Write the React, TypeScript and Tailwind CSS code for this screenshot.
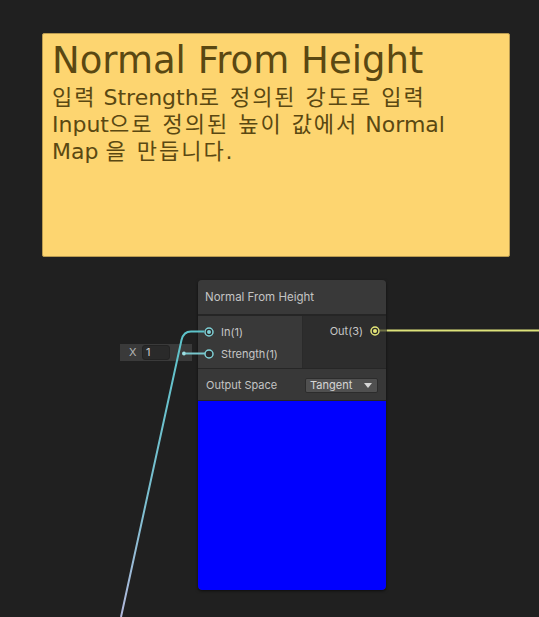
import React from "react";

function PortCircle({ color, filled }: { color: string; filled?: boolean }) {
  return (
    <svg width="10" height="10" viewBox="0 0 10 10" className="shrink-0">
      <circle cx="5" cy="5" r="4" fill="#2b2b2b" stroke={color} strokeWidth="1.5" />
      {filled && <circle cx="5" cy="5" r="2" fill={color} />}
    </svg>
  );
}

function K({ children }: { children: React.ReactNode }) {
  return <span className="tracking-[2px]">{children}</span>;
}

export default function App() {
  return (
    <div className="relative w-[539px] h-[617px] overflow-hidden bg-[#202020]">
      {/* Sticky note */}
      <div
        className="absolute left-[42px] top-[33px] w-[468px] h-[224px] rounded-[2px] border border-[#b89a50] bg-[#fdd570] pl-[9px] pt-[6px] text-[#5a4812]"
        style={{ fontFamily: '"DejaVu Sans", "Noto Sans CJK KR", sans-serif' }}
      >
        <div className="text-[37px] leading-[41px]">Normal From Height</div>
        <div className="mt-[3px] text-[22px] leading-[27px] whitespace-nowrap">
          <K>입력</K> Strength<K>로 정의된 강도로 입력</K>
          <br />
          Input<K>으로 정의된 높이 값에서</K> Normal
          <br />
          Map <K>을 만듭니다.</K>
        </div>
      </div>

      {/* Inline input for Strength */}
      <div
        className="absolute left-[120px] top-[344px] flex h-[17px] w-[72px] items-center bg-[#3a3a3a] text-[11px] text-[#b4b4b4]"
        style={{ fontFamily: "Inter, sans-serif" }}
      >
        <span className="ml-[9px] w-[13px]">X</span>
        <div className="flex h-[15px] w-[28px] items-center rounded-[3px] border border-[#232323] bg-[#2a2a2a] pl-[3px] text-[#d0d0d0]">
          1
        </div>
      </div>

      {/* Node */}
      <div
        className="absolute left-[198px] top-[280px] flex w-[188px] flex-col overflow-hidden rounded-[4px] bg-[#2a2a2a] shadow-[0_1px_3px_rgba(0,0,0,0.6)]"
        style={{ fontFamily: "Inter, sans-serif" }}
      >
        <div className="flex h-[36px] items-center border-b-2 border-[#252525] bg-[#393939] pl-[7px] pt-[2px] text-[11.5px] text-[#c4c4c4]">
          Normal From Height
        </div>
        <div className="flex h-[53px] border-b border-[#262626]">
          <div className="flex w-[105px] flex-col border-r border-[#2a2a2a] bg-[#393939] pt-[5px] text-[11px] text-[#c6c6c6]">
            <div className="flex h-[22px] items-center pl-[6px]">
              <PortCircle color="#7fd0d6" filled />
              <span className="ml-[7px]">In(1)</span>
            </div>
            <div className="flex h-[22px] items-center pl-[6px]">
              <PortCircle color="#7fd0d6" />
              <span className="ml-[7px]">Strength(1)</span>
            </div>
          </div>
          <div className="flex flex-1 flex-col items-end bg-[#2d2d2d] pt-[4px] text-[11px] text-[#c6c6c6]">
            <div className="flex h-[22px] items-center pr-[6px]">
              <span className="mr-[7px]">Out(3)</span>
              <PortCircle color="#e4e678" filled />
            </div>
          </div>
        </div>
        <div className="flex h-[32px] items-center justify-between border-b border-[#262626] bg-[#383838] pl-[8px] pr-[8px] pt-[1px] text-[11px] text-[#c4c4c4]">
          <span>Output Space</span>
          <div className="flex h-[15px] w-[73px] items-center justify-between rounded-[2px] border border-[#2c2c2c] bg-[#505050] pl-[4px] pr-[5px] text-[#d6d6d6]">
            <span>Tangent</span>
            <svg width="8" height="5" viewBox="0 0 8 5">
              <path d="M0 0 L8 0 L4 5 Z" fill="#d6d6d6" />
            </svg>
          </div>
        </div>
        <div className="h-[189px] rounded-b-[4px] bg-[#0000ff]" />
      </div>

      {/* Edges */}
      <svg className="pointer-events-none absolute left-0 top-0" width="539" height="617">
        <defs>
          <linearGradient id="inEdge" gradientUnits="userSpaceOnUse" x1="0" y1="331" x2="0" y2="617">
            <stop offset="0" stopColor="#5cc3ca" />
            <stop offset="0.6" stopColor="#7cbfd0" />
            <stop offset="1" stopColor="#b2b8dc" />
          </linearGradient>
        </defs>
        <path
          d="M204 331.5 L191 331.5 Q183.5 331.5 181.5 340 L121 617"
          fill="none"
          stroke="url(#inEdge)"
          strokeWidth="2"
        />
        <line x1="186" y1="353.5" x2="205" y2="353.5" stroke="#78c7cd" strokeWidth="2" />
        <circle cx="184" cy="353.5" r="2" fill="#9be0e4" />
        <line x1="380" y1="330.5" x2="387" y2="330.5" stroke="#6e7046" strokeWidth="2" />
        <line x1="387" y1="330.5" x2="539" y2="330.5" stroke="#dde27a" strokeWidth="2" />
      </svg>
    </div>
  );
}
